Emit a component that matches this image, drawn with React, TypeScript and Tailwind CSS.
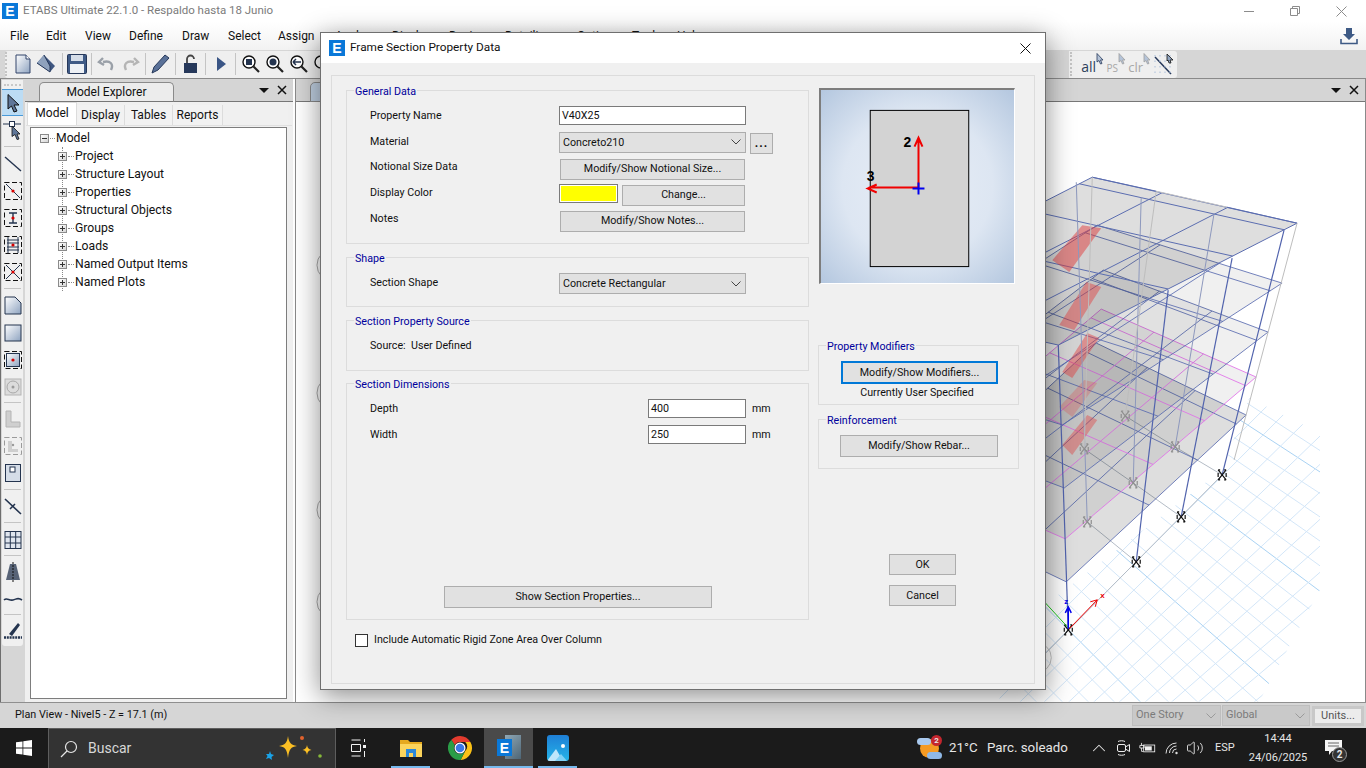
import { ChevronUp, Volume2 } from 'lucide-react'
import type { ReactNode } from 'react'

type P = [number, number]
const add = (a: P, b: P): P => [a[0] + b[0], a[1] + b[1]]
const mix = (a: P, b: P, t: number): P => [a[0] + (b[0] - a[0]) * t, a[1] + (b[1] - a[1]) * t]
const pts = (list: P[]) => list.map((p) => `${p[0]},${p[1]}`).join(' ')

const nearCorners: P[] = [[1067, 582], [1066, 539], [1065, 488], [1063, 425], [1059, 345]]
const rightCorners: P[] = [[1247, 415], [1257, 377], [1269, 332], [1283, 283], [1298, 223]]
const backVec: P[] = [[-150, -72], [-155, -68], [-165, -62], [-185, -58], [-205, -46]]
const slabFill = [0.13, 0.06, 0.06, 0.06, 0.13]
const blueCols: [P, P][] = [
  [[1069, 630], [1059, 345]],
  [[1137, 562], [1169, 290]],
  [[1182, 517], [1233, 258]],
  [[1223, 475], [1285, 230]],
]
const ghostCols: [P, P][] = [
  [[1088, 522], [1077, 182]],
  [[1134, 483], [1142, 197]],
  [[1176, 447], [1215, 213]],
  [[1085, 449], [1093, 177]],
  [[1126, 416], [1157, 191]],
  [[1235, 460], [1298, 223]],
]
const braces: { p: P[]; o: number }[] = [
  { p: [[1083, 225], [1102, 228], [1070, 272], [1053, 260]], o: 0.5 },
  { p: [[1087, 282], [1102, 287], [1075, 330], [1060, 325]], o: 0.45 },
  { p: [[1088, 333], [1100, 338], [1073, 378], [1063, 372]], o: 0.45 },
  { p: [[1085, 380], [1098, 383], [1073, 417], [1060, 407]], o: 0.25 },
  { p: [[1088, 415], [1098, 420], [1073, 455], [1063, 445]], o: 0.4 },
]

function FloorGrid() {
  const lines: ReactNode[] = []
  for (let i = -4; i < 22; i++) {
    const s: P = [1069 + i * 13, 630 - i * 13]
    const k = 1 - Math.min(Math.max(i, 0), 14) * 0.025
    lines.push(<line key={`a${i}`} x1={s[0] - 60} y1={s[1] - 60 * k} x2={s[0] + 300} y2={s[1] + 300 * k} stroke={i % 5 === 0 ? '#a9d2f3' : '#d3e6f8'} />)
  }
  for (let i = -6; i < 22; i++) {
    const s: P = [1069 + i * 14, 630 + i * 11]
    const k = 1 - Math.min(Math.max(i, 0), 14) * 0.018
    lines.push(<line key={`b${i}`} x1={s[0] - 80} y1={s[1] + 80 * k} x2={s[0] + 300} y2={s[1] - 300 * k} stroke="#d3e6f8" />)
  }
  return <g clipPath="url(#floorClip)">{lines}</g>
}

function Joint({ x, y, faded }: { x: number; y: number; faded?: boolean }) {
  const c = faded ? '#8f8f8f' : '#111'
  return (
    <g stroke={c} strokeWidth="1.200" fill="none">
      <path d={`M${x - 4} ${y - 5}L${x + 4} ${y + 5}M${x + 4} ${y - 5}L${x - 4} ${y + 5}M${x - 4} ${y - 5}h2M${x + 2} ${y + 5}h2M${x - 4} ${y + 5}h2M${x + 2} ${y - 5}h2M${x - 4} ${y - 2}v4M${x + 4} ${y - 2}v4`} />
    </g>
  )
}

function StructureModel() {
  return (
    <svg viewBox="296 102 1070 600" className="absolute inset-0 w-full h-full" fill="none">
      <defs>
        <clipPath id="floorClip">
          <polygon points="1000,702 1260,702 1321,590 1321,433 1250,398 1223,470 1000,640" />
        </clipPath>
      </defs>
      <FloorGrid />
      <g stroke="#b4bcc6">
        <line x1="1020" y1="680" x2="1223" y2="475" />
        <line x1="1137" y1="562" x2="1088" y2="522" />
        <line x1="1182" y1="517" x2="1134" y2="483" />
        <line x1="1223" y1="475" x2="1176" y2="447" />
        <line x1="1134" y1="483" x2="1085" y2="449" />
        <line x1="1176" y1="447" x2="1126" y2="416" />
      </g>
      {nearCorners.map((n, k) => {
        const r = rightCorners[k]
        const b = add(r, backVec[k])
        const l = add(n, backVec[k])
        const stroke = k === 1 ? '#e070e8' : '#5a6cb0'
        return (
          <g key={k} stroke={stroke} strokeOpacity={k === 4 ? 1 : 0.85}>
            <polygon points={pts([n, r, b, l])} fill="#000" fillOpacity={slabFill[k]} />
            {[0.46, 0.73, 0.946].map((t) => {
              const p = mix(n, r, t)
              return <line key={t} x1={p[0]} y1={p[1]} x2={p[0] + backVec[k][0]} y2={p[1] + backVec[k][1]} />
            })}
            {[0.34, 0.66].map((t) => {
              const p = mix(r, b, t)
              const q = mix(n, l, t)
              return <line key={t} x1={p[0]} y1={p[1]} x2={q[0]} y2={q[1]} />
            })}
          </g>
        )
      })}
      {braces.map((b, i) => (
        <polygon key={i} points={pts(b.p)} fill="#e23b3b" fillOpacity={b.o} />
      ))}
      <line x1="1157" y1="191" x2="1228" y2="207" stroke="#c4c4c4" />
      <line x1="1228" y1="207" x2="1298" y2="223" stroke="#5a6cb0" />
      <line x1="1093" y1="177" x2="1157" y2="191" stroke="#5a6cb0" />
      {ghostCols.map((c, i) => (
        <line key={i} x1={c[0][0]} y1={c[0][1]} x2={c[1][0]} y2={c[1][1]} stroke={i < 3 ? '#8d98bd' : '#bdbdbd'} />
      ))}
      {blueCols.map((c, i) => (
        <line key={i} x1={c[0][0]} y1={c[0][1]} x2={c[1][0]} y2={c[1][1]} stroke="#5163ad" strokeWidth="1.200" />
      ))}
      {ghostCols.slice(0, 5).map((c, i) => (
        <Joint key={i} x={c[0][0]} y={c[0][1]} faded />
      ))}
      {blueCols.map((c, i) => (
        <Joint key={i} x={c[0][0]} y={c[0][1]} />
      ))}
      <path d="M1069 628L1046 603" stroke="#1fc91f" />
      <path d="M1070 629L1098 600M1091 602l7-2-2 7" stroke="#f00000" />
      <path d="M1069 629V608M1066 613l3-6 3 6" stroke="#0000f0" strokeWidth="1.500" />
      <text x="1101" y="598" fill="#f00000" fontSize="8" fontWeight="700" fontFamily="Liberation Sans, sans-serif">x</text>
      <text x="1065" y="604" fill="#0000f0" fontSize="8" fontWeight="700" fontFamily="Liberation Sans, sans-serif">z</text>
      <circle cx="1037" cy="658" r="15" stroke="#c4c4c4" />
      {[265, 393, 510, 602].map((y) => (
        <circle key={y} cx="333" cy={y} r="16" stroke="#a8a8a8" />
      ))}
    </svg>
  )
}

const ink = '#24344f'
function Ico({ children, s = 20 }: { children: ReactNode; s?: number }) {
  return (
    <svg width={s} height={s} viewBox="0 0 20 20" fill="none" className="shrink-0">
      {children}
    </svg>
  )
}
const dashBox = <rect x="1.500" y="1.500" width="17" height="17" stroke="#111" strokeDasharray="5 2.500" />
const dot = <circle cx="10" cy="10" r="1.600" fill="#d60000" />

function LeftTool({ children, active }: { children: ReactNode; active?: boolean }) {
  return (
    <div className={`h-[27px] flex items-center justify-center ${active ? 'bg-[#bcdcf4] border-y border-[#4a9ad8]' : ''}`}>{children}</div>
  )
}
const LeftSep = ({ m }: { m: string }) => <div className={`h-px mx-[2px] bg-[#c4c4c4] ${m}`} />

function LeftToolbar() {
  return (
    <div className="w-[25px] shrink-0 border-l border-[#6e6e6e] bg-[#d6d6d6] pl-[1px]">
      <div className="w-[21px] mt-px bg-[#f0f0f0] rounded-b-[3px] pb-[3px]">
        <div className="h-[9px] flex items-center justify-center">
          <div className="w-[17px] border-t-2 border-dotted border-[#c8c8c8]" />
        </div>
        <LeftTool active>
          <Ico><path d="M5 1.500L16 12h-5l3 6-3 1-2.500-6L5 16Z" fill="#5f7698" stroke="#111" /></Ico>
        </LeftTool>
        <LeftTool>
          <Ico><path d="M0 4h6M12 4h6" stroke={ink} /><rect x="6.500" y="1.500" width="5" height="5" stroke={ink} fill="#fff" /><path d="M9 6l8 8h-3l2 5-2 .5-2-5-3 2Z" fill="#5f7698" stroke="#111" strokeWidth=".8" /></Ico>
        </LeftTool>
        <LeftSep m="my-[3px]" />
        <LeftTool>
          <Ico><path d="M2 3l16 14" stroke={ink} strokeWidth="1.400" /></Ico>
        </LeftTool>
        <LeftTool><Ico>{dashBox}<path d="M3 3l14 14" stroke={ink} />{dot}</Ico></LeftTool>
        <LeftTool><Ico>{dashBox}<path d="M6 5h8M10 5v10M6 15h8" stroke={ink} strokeWidth="1.400" />{dot}</Ico></LeftTool>
        <LeftTool><Ico>{dashBox}<path d="M4 5h12M4 8h12M4 12h12M4 15h12M5 2v16M15 2v16" stroke={ink} />{dot}</Ico></LeftTool>
        <LeftTool><Ico>{dashBox}<path d="M3 3l14 14M17 3L3 17" stroke={ink} />{dot}</Ico></LeftTool>
        <LeftSep m="my-[3px]" />
        <LeftTool><Ico><path d="M2 1h10l6 6v11H2Z" fill="url(#ico)" stroke={ink} /></Ico></LeftTool>
        <LeftTool><Ico><rect x="2" y="2" width="16" height="16" fill="url(#ico)" stroke={ink} /></Ico></LeftTool>
        <LeftTool><Ico><rect x="3.500" y="3.500" width="13" height="13" fill="url(#ico)" stroke={ink} />{dashBox}{dot}</Ico></LeftTool>
        <LeftTool><Ico><rect x="2" y="2" width="16" height="16" fill="#dcdcdc" stroke="#b4b4b4" /><circle cx="10" cy="10" r="6" stroke="#a8a8a8" /><circle cx="10" cy="10" r="1.500" fill="#9a9a9a" /></Ico></LeftTool>
        <LeftSep m="my-[2px]" />
        <LeftTool><Ico><path d="M3 2h5v11h9v5H3Z" fill="#cfcfcf" stroke="#b4b4b4" /></Ico></LeftTool>
        <LeftTool><Ico><rect x="1.500" y="1.500" width="17" height="17" stroke="#9a9a9a" strokeDasharray="5 2.500" /><path d="M5 5h4v8h6v3H5Z" fill="#cfcfcf" /><circle cx="10" cy="9" r="1.200" fill="#999" /></Ico></LeftTool>
        <LeftTool><Ico><rect x="2.500" y="1.500" width="15" height="17" fill="#d5dde8" stroke={ink} /><rect x="7" y="4" width="5" height="5" fill="#fff" stroke={ink} /></Ico></LeftTool>
        <LeftSep m="mt-[3px] mb-[2px]" />
        <LeftTool><Ico><path d="M2 3l16 15M7 13l5-5" stroke={ink} strokeWidth="1.600" /></Ico></LeftTool>
        <LeftSep m="my-[3px]" />
        <LeftTool><Ico><rect x="2" y="1.500" width="16" height="17" fill="#dfe5ee" stroke={ink} /><path d="M7.300 1.500v17M12.700 1.500v17M2 7h16M2 13h16" stroke={ink} /></Ico></LeftTool>
        <LeftSep m="my-[2px]" />
        <LeftTool><Ico><path d="M7 2h6l4 16H3Z" fill={ink} fillOpacity=".75" /><path d="M10 0v20" stroke="#111" strokeDasharray="2 1" /></Ico></LeftTool>
        <LeftTool><Ico><path d="M1 11c3-3 5 1 9 0s5-3 9 0" stroke={ink} strokeWidth="1.600" /></Ico></LeftTool>
        <LeftSep m="mt-[2px] mb-[1px]" />
        <LeftTool><Ico><path d="M6 14L15 3l2 2-8 11Z" fill={ink} /><path d="M1 17.500h18" stroke={ink} strokeWidth="2.500" strokeDasharray="2 .8" /></Ico></LeftTool>
      </div>
    </div>
  )
}

function Magnifier({ kind }: { kind: 'rect' | 'fill' | 'back' | 'plain' }) {
  return (
    <Ico>
      <circle cx="8" cy="8" r="6" fill="#fff" stroke="#111" strokeWidth="1.400" />
      {kind === 'rect' && <rect x="5" y="5" width="6" height="6" fill={ink} />}
      {kind === 'fill' && <circle cx="8" cy="8" r="3.500" fill={ink} />}
      {kind === 'back' && <path d="M4 8h8M4 8l3-3M4 8l3 3" stroke={ink} strokeWidth="1.500" />}
      <path d="M12.500 12.500L18 18" stroke="#222" strokeWidth="2.200" />
    </Ico>
  )
}

const TopSep = () => <div className="w-px h-[22px] bg-[#c4c4c4]" />

function TopToolbar() {
  return (
    <div className="h-[28px] bg-[#d6d6d6] flex items-center">
      <div className="ml-[5px] h-[27px] w-[400px] flex items-center bg-[#efefef] rounded-l-[3px]">
        <div className="w-[6px] h-[24px] border-l-2 border-dotted border-[#c4c4c4]" />
        <div className="w-[23px] flex justify-center">
          <Ico><path d="M3 1h10l4 4v14H3Z" fill="url(#ico)" stroke="#32456b" /><path d="M13 1v4h4" stroke="#32456b" fill="#fff" /></Ico>
        </div>
        <div className="w-[24px] flex justify-center">
          <Ico><path d="M1 9L8 1l11 11-5 6Z" fill="#3f5781" /><path d="M1 9l13 9v-6L8 1" fill="#8fa2bd" stroke="#26385a" /></Ico>
        </div>
        <div className="w-[4px]" />
        <TopSep />
        <div className="w-[28px] flex justify-center">
          <Ico><rect x="0.500" y="0.500" width="19" height="19" rx="1" fill="#3f5a85" stroke="#26385a" /><rect x="4" y="1" width="12" height="6" fill="#d5dde8" /><rect x="3" y="10" width="14" height="9" fill="#eef1f5" /></Ico>
        </div>
        <TopSep />
        <div className="w-[27px] flex justify-center">
          <Ico><path d="M15 16c3-6-1-10-8-8M7 4L3 8l5 3" stroke="#9aa0a8" strokeWidth="2.400" /></Ico>
        </div>
        <div className="w-[24px] flex justify-center">
          <Ico><path d="M5 16c-3-6 1-10 8-8M13 4l4 4-5 3" stroke="#b5b5b5" strokeWidth="2.400" /></Ico>
        </div>
        <div className="w-[2px]" />
        <TopSep />
        <div className="w-[29px] flex justify-center">
          <Ico><path d="M1 19l2-6L14 1l4 3L7 16Z" fill="#5a7198" stroke="#26385a" /></Ico>
        </div>
        <TopSep />
        <div className="w-[29px] flex justify-center">
          <Ico><rect x="3" y="9" width="13" height="10" fill="#26385a" /><path d="M6 9V5a3.500 3.500 0 0 1 7 0" stroke="#444" strokeWidth="1.800" /></Ico>
        </div>
        <TopSep />
        <div className="w-[29px] flex justify-center">
          <Ico><path d="M6 3l9 7-9 7Z" fill="#3a5585" /></Ico>
        </div>
        <TopSep />
        <div className="w-[24px] ml-[3px] flex justify-center"><Magnifier kind="rect" /></div>
        <div className="w-[24px] flex justify-center"><Magnifier kind="fill" /></div>
        <div className="w-[24px] flex justify-center"><Magnifier kind="back" /></div>
        <div className="w-[24px] flex justify-center"><Magnifier kind="plain" /></div>
      </div>
      <div className="flex-1" />
      <div className="h-[27px] w-[108px] mr-[189px] flex items-center bg-[#efefef] rounded-r-[3px]" style={{ fontFamily: '"Open Sans", sans-serif' }}>
        <div className="w-[8px] h-[24px] ml-[1px] border-l-2 border-dotted border-[#c4c4c4]" />
        <div className="w-[18px] text-[14px] text-[#2d3f5c] pt-[5px] text-right leading-none">all</div>
        <Cursor c="#26385a" />
        <div className="w-[14px] text-[10px] text-[#a8a8a8] pt-[8px] text-right leading-none">PS</div>
        <Cursor c="#a0a0a0" />
        <div className="w-[17px] text-[13px] text-[#a8a8a8] pt-[6px] text-right leading-none">clr</div>
        <Cursor c="#a0a0a0" />
        <svg width="20" height="22" viewBox="0 0 20 22" fill="none" className="ml-[3px] shrink-0">
          <path d="M1 4l16 17" stroke="#26385a" strokeWidth="1.500" />
          <path d="M1 2v18M6 2v18M11 2v18M16 2v18" stroke="#a9bdd9" strokeDasharray="1.500 4" />
          <path d="M13 1l6 6h-3l1 3-2 0-1-3-1 1Z" fill="#8fa3bf" stroke="#111" strokeWidth=".8" />
        </svg>
      </div>
    </div>
  )
}

function Cursor({ c }: { c: string }) {
  return (
    <svg width="8" height="12" viewBox="0 0 8 12" className="mb-[10px] shrink-0">
      <path d="M1 0.500L7 7H4.500l1.500 3.500-1.500.5L3 7.500 1 9Z" fill="#b4c3d8" stroke={c} strokeWidth=".8" />
    </svg>
  )
}

function TitleBar() {
  return (
    <div className="h-[22px] bg-white flex items-center text-[11.500px] text-[#7b7b7b]">
      <EtabsBadge className="ml-[2px] mr-[5px] w-[16px] h-[16px]" />
      <span>ETABS Ultimate 22.1.0 - Respaldo hasta 18 Junio</span>
      <div className="ml-auto mr-[19px] flex items-center gap-[36px] text-[#8c8c8c]">
        <svg width="10" height="10" viewBox="0 0 10 10" stroke="currentColor" fill="none"><path d="M0 5.500h10" /></svg>
        <svg width="10" height="10" viewBox="0 0 10 10" stroke="currentColor" fill="none"><path d="M.5 2.500h7v7h-7zM2.500 2.500v-2h7v7h-2" /></svg>
        <svg width="11" height="11" viewBox="0 0 11 11" stroke="currentColor" fill="none"><path d="M.5.500l10 10M10.500.500l-10 10" /></svg>
      </div>
    </div>
  )
}

function EtabsBadge({ className }: { className: string }) {
  return (
    <span className={`${className} bg-[#0a78d8] text-white flex items-center justify-center font-bold text-[14px] leading-none`} style={{ fontFamily: '"Liberation Sans", sans-serif' }}>
      E
    </span>
  )
}

const menuItems: [string, string][] = [
  ['File', 'w-[36px]'], ['Edit', 'w-[39px]'], ['View', 'w-[44px]'], ['Define', 'w-[53px]'], ['Draw', 'w-[46px]'], ['Select', 'w-[50px]'], ['Assign', 'w-[57px]'],
  ['Analyze', 'w-[57px]'], ['Display', 'w-[57px]'], ['Design', 'w-[56px]'], ['Detailing', 'w-[72px]'], ['Options', 'w-[55px]'], ['Tools', 'w-[45px]'], ['Help', 'w-[40px]'],
]

function MenuBar() {
  return (
    <div className="h-[28px] bg-gradient-to-b from-white to-[#f2f2f2] flex items-center pl-[10px] text-[12px] text-[#111]">
      {menuItems.map(([m, w]) => (
        <span key={m} className={w}>{m}</span>
      ))}
      <svg width="18" height="18" viewBox="0 0 18 18" className="ml-auto mr-[8px]">
        <path d="M6 1h6v6h3l-6 6-6-6h3Z" fill="#3e5a85" />
        <path d="M1 12v4.500h16V12" stroke="#3e5a85" strokeWidth="1.600" fill="none" />
      </svg>
    </div>
  )
}

function PanelHeaderButtons() {
  return (
    <div className="ml-auto flex items-center gap-[8px] mr-[6px]">
      <svg width="10" height="5" viewBox="0 0 10 5"><path d="M0 0h10L5 5Z" fill="#111" /></svg>
      <svg width="10" height="10" viewBox="0 0 10 10" stroke="#111" strokeWidth="1.500"><path d="M1 1l8 8M9 1l-8 8" /></svg>
    </div>
  )
}

const treeItems = ['Project', 'Structure Layout', 'Properties', 'Structural Objects', 'Groups', 'Loads', 'Named Output Items', 'Named Plots']

function PlusBox({ minus }: { minus?: boolean }) {
  return (
    <span className="w-[9px] h-[9px] border border-[#8b8b8b] bg-gradient-to-br from-white to-[#d5d5d5] flex items-center justify-center shrink-0 relative">
      <span className="w-[5px] h-px bg-[#333]" />
      {!minus && <span className="absolute w-px h-[5px] bg-[#333]" />}
    </span>
  )
}

function ModelExplorer() {
  return (
    <div className="w-[271px] shrink-0 flex flex-col border-r border-[#8a8a8a] pr-[2px]">
      <div className="h-[23px] bg-[#d5d5d5] border-b border-[#777] flex items-end pl-[14px] text-[12px]">
        <div className="w-[135px] h-[20px] -mb-px bg-[#ececec] border border-[#8a8a8a] border-b-[#777] rounded-t-[5px] text-center leading-[18px]">Model Explorer</div>
        <div className="self-center ml-auto"><PanelHeaderButtons /></div>
      </div>
      <div className="flex-1 bg-[#f0f0f0] flex flex-col px-[1px] pb-[3px]">
        <div className="h-[24px] flex items-end border-b border-[#e0e0e0] text-[12px]">
          <div className="w-[50px] h-[23px] bg-white border border-b-0 border-[#dcdcdc] text-center leading-[21px] ml-[1px]">Model</div>
          <div className="w-[48px] h-[20px] bg-[#f2f2f2] border-r border-[#dcdcdc] text-center leading-[20px]">Display</div>
          <div className="w-[48px] h-[20px] bg-[#f2f2f2] border-r border-[#dcdcdc] text-center leading-[20px]">Tables</div>
          <div className="w-[50px] h-[20px] bg-[#f2f2f2] border-r border-[#dcdcdc] text-center leading-[20px]">Reports</div>
        </div>
        <div className="flex-1 mt-[1px] ml-[4px] mr-[5px] bg-white border border-[#7d7d7d] pl-[9px] pt-[1px] text-[12.200px] text-[#111]">
          <div className="h-[18px] flex items-center">
            <PlusBox minus />
            <span className="w-[5px] ml-[1px] mr-[1px] border-t border-dotted border-[#888]" />
            <span>Model</span>
          </div>
          <div className="ml-[22px] border-l border-dotted border-[#888]">
            {treeItems.map((t) => (
              <div key={t} className="h-[18px] flex items-center -ml-[5px]">
                <PlusBox />
                <span className="w-[6px] ml-[1px] mr-[1px] border-t border-dotted border-[#888]" />
                <span>{t}</span>
              </div>
            ))}
          </div>
        </div>
      </div>
    </div>
  )
}

function ViewPane() {
  return (
    <div className="flex-1 flex flex-col border-r border-[#8a8a8a]">
      <div className="h-[23px] bg-[#d5d5d5] border-b border-[#777] flex items-end pl-[14px]">
        <div className="w-[60px] h-[20px] -mb-px bg-[#c0d0e2] border border-[#8a8a8a] rounded-t-[5px]" />
        <div className="self-center ml-auto"><PanelHeaderButtons /></div>
      </div>
      <div className="flex-1 bg-white relative overflow-hidden">
        <StructureModel />
      </div>
    </div>
  )
}

function StatusBar() {
  return (
    <div className="h-[26px] bg-[#d6d6d6] border-t border-[#8f8f8f] flex items-center pl-[15px] text-[10.800px] text-[#111]">
      <span>Plan View - Nivel5 - Z = 17.1 (m)</span>
      <div className="ml-auto flex items-center text-[11px] text-[#7b7b7b] mr-[2px]">
        <StatusSelect label="One Story" w="w-[89px]" />
        <StatusSelect label="Global" w="w-[88px]" />
        <div className="ml-[1px] w-[52px] h-[20px] border-[3px] border-[#c8c8c8] bg-[#ececec] text-[#555] text-center leading-[14px]">Units...</div>
      </div>
    </div>
  )
}

function StatusSelect({ label, w }: { label: string; w: string }) {
  return (
    <div className={`${w} h-[21px] bg-[#c9c9c9] border border-[#bebebe] flex items-center pl-[3px] pr-[4px] mr-px`}>
      <span>{label}</span>
      <Chevron c="#9a9a9a" cls="ml-auto" />
    </div>
  )
}

function Chevron({ c, cls }: { c: string; cls?: string }) {
  return (
    <svg width="10" height="6" viewBox="0 0 10 6" fill="none" className={cls}>
      <path d="M.5.500L5 5l4.500-4.500" stroke={c} />
    </svg>
  )
}

function Group({ title, children, className, body }: { title: string; children: ReactNode; className: string; body: string }) {
  return (
    <div className={`border border-[#dcdcdc] flex flex-col ${className}`}>
      <div className="-mt-[6px] ml-[7px] w-fit bg-[#f0f0f0] px-px h-[14px] leading-[14px] text-[#00009c]">{title}</div>
      <div className={`flex flex-col flex-1 ${body}`}>{children}</div>
    </div>
  )
}

function WinButton({ children, className }: { children: ReactNode; className: string }) {
  return <div className={`bg-[#e1e1e1] border border-[#adadad] pt-px flex items-center justify-center ${className}`}>{children}</div>
}

function Combo({ value }: { value: string }) {
  return (
    <div className="w-[187px] h-[21px] bg-[#e1e1e1] border border-[#adadad] flex items-center pl-[3px] pr-[4px]">
      <span className="pt-[2px]">{value}</span>
      <Chevron c="#444" cls="ml-auto" />
    </div>
  )
}

const labelW = 'w-[189px] shrink-0'

function FrameSectionDialog() {
  return (
    <div className="absolute left-[320px] top-[32px] w-[726px] h-[658px] bg-[#f0f0f0] border border-[#6f6f6f] shadow-[0_6px_26px_rgba(0,0,0,0.45)] flex flex-col text-[10.700px] text-[#111]">
      <div className="h-[30px] bg-white shrink-0 flex items-center pl-[8px] pr-[9px] text-[11.800px]">
        <EtabsBadge className="w-[16px] h-[16px] mr-[5px]" />
        <span>Frame Section Property Data</span>
        <svg width="11" height="11" viewBox="0 0 11 11" stroke="#111" className="ml-auto mr-[5px]"><path d="M.5.500l10 10M10.500.500l-10 10" /></svg>
      </div>
      <div className="mx-[10px] mt-[12px] mb-[5px] flex-1 border border-[#dcdcdc] flex pl-[14px] pt-[14px]">
        <div className="w-[463px] shrink-0 flex flex-col">
          <Group title="General Data" className="h-[154px]" body="pl-[23px] pt-[4px]">
            <div className="h-[26px] flex items-center">
              <span className={labelW}>Property Name</span>
              <div className="w-[187px] h-[19px] bg-white border border-[#7a7a7a] pl-[2px] leading-[17px] -mt-px">V40X25</div>
            </div>
            <div className="h-[26px] flex items-center">
              <span className={labelW}>Material</span>
              <Combo value="Concreto210" />
              <WinButton className="w-[23px] h-[21px] ml-[4px] mt-[2px] font-bold leading-none pb-[2px]"><span className="tracking-[1px] text-[12px]">...</span></WinButton>
            </div>
            <div className="h-[26px] flex items-center">
              <span className={`${labelW} -mt-px`}>Notional Size Data</span>
              <WinButton className="w-[185px] h-[21px] ml-px mt-[2px]">Modify/Show Notional Size...</WinButton>
            </div>
            <div className="h-[26px] flex items-center">
              <span className={`${labelW} -mt-px`}>Display Color</span>
              <div className="w-[59px] h-[19px] border border-[#7a7a7a] bg-white p-px -mt-[2px]"><div className="w-full h-full bg-[#ffff00]" /></div>
              <WinButton className="w-[123px] h-[21px] ml-[4px] mt-[2px]">Change...</WinButton>
            </div>
            <div className="h-[26px] flex items-center">
              <span className={`${labelW} -mt-px`}>Notes</span>
              <WinButton className="w-[185px] h-[21px] ml-px mt-[2px]">Modify/Show Notes...</WinButton>
            </div>
          </Group>
          <Group title="Shape" className="h-[50px] mt-[13px]" body="pl-[23px] pt-[7px]">
            <div className="h-[21px] flex items-center">
              <span className={labelW}>Section Shape</span>
              <Combo value="Concrete Rectangular" />
            </div>
          </Group>
          <Group title="Section Property Source" className="h-[51px] mt-[13px]" body="pl-[23px] pt-[10px]">
            <div className="h-[14px] leading-[14px]">Source:&nbsp;&nbsp;User Defined</div>
          </Group>
          <Group title="Section Dimensions" className="h-[237px] mt-[12px]" body="pl-[23px] pt-[4px]">
            <div className="h-[26px] flex items-center">
              <span className="w-[278px] shrink-0">Depth</span>
              <div className="w-[98px] h-[19px] bg-white border border-[#7a7a7a] pl-[2px] leading-[17px] -mt-px">400</div>
              <span className="ml-[6px]">mm</span>
            </div>
            <div className="h-[26px] flex items-center">
              <span className="w-[278px] shrink-0">Width</span>
              <div className="w-[98px] h-[19px] bg-white border border-[#7a7a7a] pl-[2px] leading-[17px] -mt-px">250</div>
              <span className="ml-[6px]">mm</span>
            </div>
            <WinButton className="w-[268px] h-[22px] mt-auto mb-[11px] ml-[74px]">Show Section Properties...</WinButton>
          </Group>
          <label className="mt-[12px] ml-[9px] flex items-center gap-[6px]">
            <span className="w-[13px] h-[13px] bg-white border border-[#333]" />
            <span>Include Automatic Rigid Zone Area Over Column</span>
          </label>
        </div>
        <div className="w-[201px] ml-[9px] shrink-0 flex flex-col">
          <div className="w-[196px] h-[196px] ml-px -mt-[2px] border-t-2 border-l-2 border-[#7d7d7d] border-r border-b border-r-white border-b-white bg-[radial-gradient(circle,#e8eef7_0%,#dde6f2_55%,#b4c7df_100%)]">
            <svg viewBox="821 90 194 194" className="w-full h-full" fill="none">
              <rect x="870.500" y="110.500" width="99" height="157" fill="#d3d3d3" stroke="#000" />
              <path d="M919 188V139M915 147l4-9 4 9M919 188H869M877 185l-9 4 9 4" stroke="#f00000" strokeWidth="2" />
              <path d="M913 189h12M919 183v12" stroke="#0000f0" strokeWidth="2" />
              <text x="904" y="147" fill="#000" fontSize="14" fontWeight="700" fontFamily="Liberation Sans, sans-serif">2</text>
              <text x="867" y="181" fill="#000" fontSize="14" fontWeight="700" fontFamily="Liberation Sans, sans-serif">3</text>
            </svg>
          </div>
          <Group title="Property Modifiers" className="h-[60px] mt-[61px]" body="pt-[7px]">
            <div className="ml-[22px] w-[157px] h-[23px] bg-[#e1e1e1] border-2 border-[#0078d7] pt-px flex items-center justify-center">Modify/Show Modifiers...</div>
            <div className="text-center mt-[1px] leading-[16px] pr-[3px]">Currently User Specified</div>
          </Group>
          <Group title="Reinforcement" className="h-[50px] mt-[14px]" body="pt-[7px]">
            <WinButton className="ml-[21px] w-[158px] h-[22px]">Modify/Show Rebar...</WinButton>
          </Group>
          <WinButton className="w-[67px] h-[21px] ml-[71px] mt-[85px]">OK</WinButton>
          <WinButton className="w-[67px] h-[21px] ml-[71px] mt-[10px]">Cancel</WinButton>
        </div>
      </div>
    </div>
  )
}

function ChromeIcon() {
  return (
    <svg width="24" height="24" viewBox="0 0 24 24">
      <path d="M12 0a12 12 0 0 1 10.400 6H12a6 6 0 0 0-5.200 3L3.300 3.800A12 12 0 0 1 12 0Z" fill="#e33b2e" />
      <path d="M22.400 6a12 12 0 0 1-9.800 18l4.600-9a6 6 0 0 0 0-9Z" fill="#fbc116" />
      <path d="M12.600 24A12 12 0 0 1 3.300 3.800L6.800 9a6 6 0 0 0 5.200 9c1.900 0 3.900-1 5.200-3Z" fill="#2a9d47" />
      <circle cx="12" cy="12" r="5.500" fill="#fff" />
      <circle cx="12" cy="12" r="4.300" fill="#3b78e7" />
    </svg>
  )
}

function Taskbar() {
  return (
    <div className="h-[40px] bg-[#1b1b1b] flex items-stretch text-[#e6e6e6]">
      <div className="w-[48px] flex items-center justify-center">
        <svg width="16" height="16" viewBox="0 0 16 16" fill="#fff"><path d="M0 2.300l6.500-.9v6.200H0ZM7.300 1.300L16 0v7.600H7.300ZM0 8.400h6.500v6.200L0 13.700ZM7.300 8.400H16V16l-8.700-1.200Z" /></svg>
      </div>
      <div className="w-[288px] bg-[#333] border border-[#5e5e5e] border-b-0 flex items-center">
        <svg width="18" height="18" viewBox="0 0 18 18" fill="none" stroke="#e6e6e6" strokeWidth="1.200" className="ml-[11px]"><circle cx="11" cy="7" r="5.500" /><path d="M7 11l-6 6" /></svg>
        <span className="ml-[10px] text-[14px] text-[#d8d8d8]">Buscar</span>
        <svg width="62" height="30" viewBox="0 0 62 30" className="ml-auto mr-[9px]">
          <path d="M24 2c1 7 3 9 9 10-6 1-8 3-9 12-1-9-3-11-9-12 6-1 8-3 9-10Z" fill="#fbbf24" />
          <path d="M43 11c.5 3 1.500 4 4.500 5-3 .5-4 2-4.500 5-.5-3-1.500-4.500-4.500-5 3-1 4-2 4.500-5Z" fill="#fbbf24" />
          <path d="M6 17l1 3 3 1-2.500 2 .5 3-3-2-3 1 1.500-3-1.500-2h3Z" fill="#1aa3e8" />
          <circle cx="38" cy="4" r="2" fill="#e2622d" />
          <circle cx="56" cy="22" r="1.800" fill="#86b83a" />
        </svg>
      </div>
      <div className="w-[46px] flex items-center justify-center">
        <svg width="16" height="18" viewBox="0 0 16 18" fill="none" stroke="#f2f2f2"><path d="M.5 1h9M.5 17h9M.5 5.500h9v7h-9z" /><rect x="12" y="6" width="3" height="3" fill="#f2f2f2" stroke="none" /><path d="M13.500 0v3M13.500 12v6" /></svg>
      </div>
      <TaskSlot cls="ml-[4px]" on>
        <svg width="22" height="22" viewBox="0 0 22 22"><path d="M0 3h8l2 2h12v15H0Z" fill="#e5a91f" /><path d="M0 7h22v13H0Z" fill="#fbd45c" /><path d="M6 12h10v8h-3v-4H9v4H6Z" fill="#2b88d8" /></svg>
      </TaskSlot>
      <TaskSlot><ChromeIcon /></TaskSlot>
      <div className="w-[49px] bg-[#4a4a4a] flex items-center justify-center border-b-2 border-[#76b9ed] relative">
        <span className="w-[16px] h-[24px] bg-[linear-gradient(135deg,#8fa7b5,#4e6676)] ml-[8px]" />
        <EtabsBadge className="w-[15px] h-[17px] absolute left-[13px] top-[11px]" />
      </div>
      <TaskSlot on>
        <span className="w-[22px] h-[26px] rounded-[3px] bg-gradient-to-b from-[#1f7fd6] to-[#27b4e8] flex items-end justify-center overflow-hidden">
          <svg width="22" height="18" viewBox="0 0 22 18"><circle cx="16" cy="3" r="2" fill="#fff" /><path d="M0 18L9 6l7 12Z" fill="#bfe6fb" /><path d="M8 18l6-7 6 7Z" fill="#7fd0f5" /></svg>
        </span>
      </TaskSlot>
      <div className="ml-auto flex items-center">
        <div className="w-[26px] h-[26px] relative">
          <span className="absolute left-[3px] top-[4px] w-[19px] h-[19px] rounded-full bg-[#f59a23]" />
          <span className="absolute left-0 top-[3px] w-[14px] h-[7px] rounded-full bg-[#a9c9ee]" />
          <span className="absolute left-[10px] top-[17px] w-[15px] h-[7px] rounded-full bg-[#8fb8e6]" />
          <span className="absolute right-[1px] top-0 w-[11px] h-[11px] rounded-full bg-[#c4262e] text-[8px] leading-[11px] font-bold text-center">2</span>
        </div>
        <span className="ml-[6px] w-[29px] text-[13.300px] whitespace-nowrap">21°C</span>
        <span className="ml-[9px] w-[81px] text-[13.300px] whitespace-nowrap">Parc. soleado</span>
        <ChevronUp size={22} strokeWidth={1.100} className="ml-[20px]" />
        <svg width="18" height="18" viewBox="0 0 18 18" fill="none" stroke="#eee" className="ml-[5px]"><rect x="2.500" y="5.500" width="8" height="7" rx="1.500" /><path d="M10.500 8l4-2.500v7l-4-2.500M3 2.500c2-1 5-1 7 0M3 15.500c2 1 5 1 7 0" /></svg>
        <svg width="17" height="12" viewBox="0 0 20 14" className="ml-[6px]" fill="none" stroke="#eee"><rect x="5.500" y="3.500" width="13" height="8" /><rect x="7" y="5" width="8" height="5" fill="#eee" stroke="none" /><path d="M3 1v3M1 4h5v3H1zM3 7v4h2" /></svg>
        <svg width="14" height="14" viewBox="0 0 14 14" fill="none" stroke="#ddd" className="ml-[9px]"><circle cx="11.500" cy="12" r="1.200" fill="#ddd" stroke="none" /><path d="M7.500 12a4 4 0 0 1 4-4M4.500 12a7 7 0 0 1 7-7M1 12.500a10.500 10.500 0 0 1 10.500-10.500" /></svg>
        <Volume2 size={18} strokeWidth={1.200} className="ml-[7px]" />
        <span className="ml-[11px] w-[20px] text-[11px] whitespace-nowrap">ESP</span>
        <div className="ml-[11px] w-[64px] text-[11px] leading-[19px] text-center">
          <div>14:44</div>
          <div>24/06/2025</div>
        </div>
        <div className="w-[56px] pl-[15px] h-[24px] relative">
          <svg width="17" height="15" viewBox="0 0 17 15" className="mt-[4px]"><path d="M0 0h17v11H7l-3 4v-4H0Z" fill="#f5f5f5" /><path d="M3 3h11M3 6h11" stroke="#666" /></svg>
          <span className="absolute left-[22px] top-[11px] w-[15px] h-[15px] rounded-full bg-[#333] border border-[#999] text-[10px] leading-[13px] font-bold text-center">2</span>
        </div>
      </div>
    </div>
  )
}

function TaskSlot({ children, on, cls }: { children: ReactNode; on?: boolean; cls?: string }) {
  return (
    <div className={`w-[49px] flex items-center justify-center relative ${cls ?? ''}`}>
      {children}
      {on && <span className="absolute bottom-0 left-[5px] right-[5px] h-[2px] bg-[#76b9ed]" />}
    </div>
  )
}

export default function App() {
  return (
    <div className="relative w-[1366px] h-[768px] overflow-hidden bg-white flex flex-col text-[#111]" style={{ fontFamily: 'Roboto, "Liberation Sans", sans-serif' }}>
      <svg className="absolute w-0 h-0">
        <defs>
          <linearGradient id="ico" x1="0" y1="0" x2="1" y2="1">
            <stop offset="0" stopColor="#fff" />
            <stop offset="1" stopColor="#8ea3c0" />
          </linearGradient>
        </defs>
      </svg>
      <TitleBar />
      <MenuBar />
      <TopToolbar />
      <div className="flex-1 min-h-0 flex border-t border-[#8a8a8a]">
        <LeftToolbar />
        <ModelExplorer />
        <ViewPane />
      </div>
      <StatusBar />
      <Taskbar />
      <FrameSectionDialog />
    </div>
  )
}
